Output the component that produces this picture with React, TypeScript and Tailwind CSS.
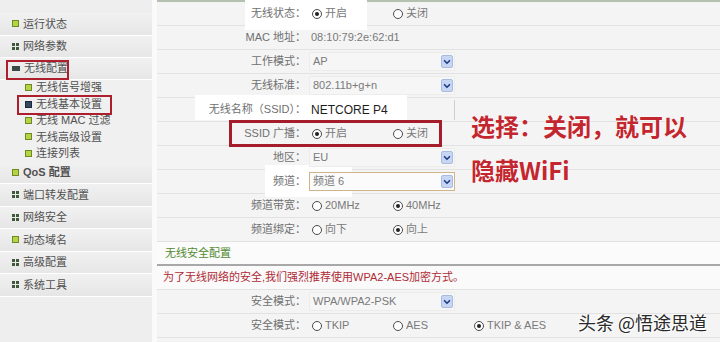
import React from "react";
import clsx from "clsx";
import { ChevronDown } from "lucide-react";

type Icon = "lime" | "dots" | "bar" | "navy";

const mainMenu: { label: string; icon: Icon; bold?: boolean }[] = [
  { label: "QoS 配置", icon: "lime", bold: true },
  { label: "端口转发配置", icon: "dots" },
  { label: "网络安全", icon: "dots" },
  { label: "动态域名", icon: "lime" },
  { label: "高级配置", icon: "dots" },
  { label: "系统工具", icon: "dots" },
];

const subMenu: { label: string; icon: Icon }[] = [
  { label: "无线信号增强", icon: "lime" },
  { label: "无线基本设置", icon: "navy" },
  { label: "无线 MAC 过滤", icon: "lime" },
  { label: "无线高级设置", icon: "lime" },
  { label: "连接列表", icon: "lime" },
];

function MenuIcon({ kind }: { kind: Icon }) {
  if (kind === "dots")
    return (
      <span className="grid h-[7px] w-[7px] grid-cols-2 gap-[1px]">
        <span className="bg-[#3f5a3a]" />
        <span className="bg-[#3f5a3a]" />
        <span className="bg-[#3f5a3a]" />
        <span className="bg-[#3f5a3a]" />
      </span>
    );
  if (kind === "bar") return <span className="h-[5px] w-[8px] bg-[#3a4a44]" />;
  if (kind === "navy") return <span className="h-[7px] w-[7px] border border-[#1c2a3c] bg-[#34485e]" />;
  return <span className="h-[7px] w-[7px] border border-[#6f8a22] bg-[#b5d444]" />;
}

function MainItem({ label, icon, bold, h = "h-[22.5px]" }: { label: string; icon: Icon; bold?: boolean; h?: string }) {
  return (
    <div className={clsx("flex items-center gap-[4px] border-b border-white bg-linear-to-b from-[#f1f1f1] to-[#e6e6e6] pl-[12px]", h)}>
      <MenuIcon kind={icon} />
      <span className={clsx("text-[11px] text-[#505050]", bold && "font-semibold text-[#3c3c3c]")}>{label}</span>
    </div>
  );
}

function Radio({ on }: { on?: boolean }) {
  return (
    <span className="flex h-[10px] w-[10px] items-center justify-center rounded-full border border-[#4a4a4a] bg-white">
      {on && <span className="h-[4px] w-[4px] rounded-full bg-[#222]" />}
    </span>
  );
}

function Radios({ items, on }: { items: string[]; on: number }) {
  return (
    <div className="flex pl-[3px]">
      {items.map((t, i) => (
        <div key={t} className="flex w-[81px] items-center gap-[3px]">
          <Radio on={i === on} />
          <span>{t}</span>
        </div>
      ))}
    </div>
  );
}

function Select({ value, boxed }: { value: string; boxed?: boolean }) {
  return (
    <div
      className={clsx(
        "flex h-[19px] w-[146px] items-center justify-between border pl-[3px] pr-[1px]",
        boxed ? "border-[#d0b48a] bg-[#fbfbfb]" : "border-[#ececec] bg-[#f6f6f6]"
      )}
    >
      <span>{value}</span>
      <span className="flex h-[13px] w-[12px] items-center justify-center rounded-[2px] border border-[#a9bbe0] bg-[#c8d6f3]">
        <ChevronDown className="h-[10px] w-[10px] text-[#1f3f8c]" strokeWidth={4} />
      </span>
    </div>
  );
}

function Row({ label, children, className }: { label?: string; children?: React.ReactNode; className?: string }) {
  return (
    <div className={clsx("flex h-[24px] items-center border-b border-[#e2e2e2] bg-[#f4f4f4]", className)}>
      <div className="relative z-[2] w-[150px] pr-[1px] text-right text-[#707070]">{label}</div>
      <div className="relative z-[2] ml-[2px] text-[#7a7a7a]">{children}</div>
    </div>
  );
}

export default function App() {
  return (
    <div className="relative flex h-[342px] w-[720px] overflow-hidden bg-[#f4f4f4] font-['Liberation_Sans','Noto_Sans_CJK_SC',sans-serif] text-[11px]">
      {/* sidebar */}
      <div className="w-[152px] bg-[#eeeeee] pt-[13px]">
        <MainItem label="运行状态" icon="lime" />
        <MainItem label="网络参数" icon="dots" />
        <MainItem label="无线配置" icon="bar" h="h-[21.5px]" />
        <div className="h-[82px] bg-[#f0f0f0]">
          {subMenu.map((s) => (
            <div key={s.label} className="flex h-[16.4px] items-center gap-[4px] pl-[25px]">
              <MenuIcon kind={s.icon} />
              <span className="text-[11px] text-[#505050]">{s.label}</span>
            </div>
          ))}
        </div>
        {mainMenu.map((m) => (
          <MainItem key={m.label} {...m} />
        ))}
      </div>
      <div className="w-[5px] bg-[#fafafa]" />

      {/* content */}
      <div className="relative flex-1 border-t-2 border-[#b4c0b0]">
        <div className="absolute left-[88px] top-[-2px] z-[1] h-[30px] w-[122px] bg-white" />
        <div className="absolute left-[38px] top-[93px] z-[1] h-[25px] w-[212px] bg-white" />
        <div className="absolute left-[108px] top-[163px] z-[1] h-[32px] w-[87px] bg-white" />

        <Row label="无线状态：">
          <Radios items={["开启", "关闭"]} on={0} />
        </Row>
        <Row label="MAC 地址：">
          <span className="pl-[2px]">08:10:79:2e:62:d1</span>
        </Row>
        <Row label="工作模式：">
          <Select value="AP" />
        </Row>
        <Row label="无线标准：">
          <Select value="802.11b+g+n" />
        </Row>
        <Row label="无线名称（SSID）：">
          <div className="flex h-[20px] w-[146px] items-center border-r border-[#cfcfcf] pl-[2px] text-[12px] text-[#1e1e1e]">
            NETCORE P4
          </div>
        </Row>
        <Row label="SSID 广播：">
          <Radios items={["开启", "关闭"]} on={0} />
        </Row>
        <Row label="地区：">
          <Select value="EU" />
        </Row>
        <Row label="频道：">
          <Select value="频道 6" boxed />
        </Row>
        <Row label="频道带宽：">
          <Radios items={["20MHz", "40MHz"]} on={1} />
        </Row>
        <Row label="频道绑定：">
          <Radios items={["向下", "向上"]} on={1} />
        </Row>
        <div className="flex h-[24px] items-center border-b-2 border-[#a8a8a8] bg-[#fbfbfb] pl-[8px] text-[11px] text-[#4f8a2e]">
          无线安全配置
        </div>
        <div className="flex h-[24px] items-center border-b border-[#e2e2e2] bg-[#fafafa] pl-[6px] text-[11px] text-[#b02a36]">
          为了无线网络的安全,我们强烈推荐使用WPA2-AES加密方式。
        </div>
        <Row label="安全模式：">
          <Select value="WPA/WPA2-PSK" />
        </Row>
        <Row label="安全模式：">
          <Radios items={["TKIP", "AES", "TKIP & AES"]} on={2} />
        </Row>
      </div>

      {/* annotations */}
      <div className="pointer-events-none absolute left-[6px] top-[60px] h-[20px] w-[63px] border-2 border-[#ad1f2c]" />
      <div className="pointer-events-none absolute left-[17px] top-[95px] h-[20px] w-[95px] border-2 border-[#ad1f2c]" />
      <div className="pointer-events-none absolute left-[229px] top-[120px] h-[27px] w-[213px] border-[3px] border-[#a51d2b]" />

      <div className="pointer-events-none absolute left-[471px] top-[112px] text-[24px] font-bold leading-[28px] text-[#c4262f] [text-shadow:0_0_2px_#fff] font-['Noto_Sans_CJK_SC',sans-serif]">
        <div>选择：关闭，就可以</div>
        <div className="mt-[16px]">隐藏WiFi</div>
      </div>

      <div className="pointer-events-none absolute left-[578px] top-[310px] text-[18px] leading-[24px] text-[#2a2a2a] [text-shadow:1px_1px_0_#fff,-1px_-1px_0_#fff] font-['Noto_Sans_CJK_SC',sans-serif]">
        头条 @悟途思道
      </div>
    </div>
  );
}
